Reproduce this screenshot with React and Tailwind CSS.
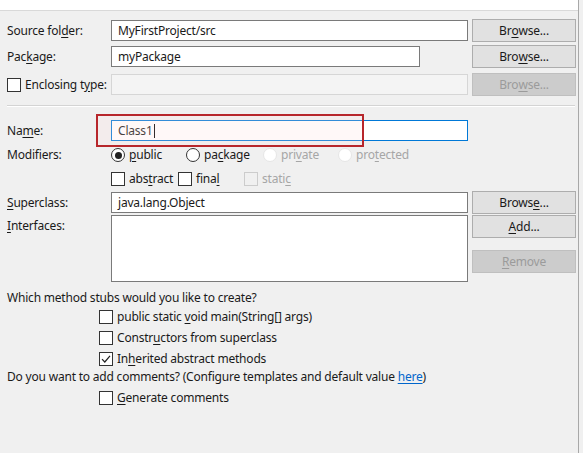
const U = ({ children }) => <span className="underline underline-offset-2">{children}</span>;

function Field({ w = 'w-[357px]', value, disabled, focused }) {
  return (
    <div
      className={
        'h-[21px] flex items-center px-[6px] ' +
        w +
        ' ' +
        (disabled
          ? 'bg-[#f4f4f4] border border-[#d6d6d6]'
          : focused
          ? 'bg-white border border-[#0078d7]'
          : 'bg-white border border-[#7a7a7a]')
      }
    >
      {value}
    </div>
  );
}

function Btn({ children, disabled }) {
  return (
    <div
      className={
        'w-[104px] h-[23px] flex items-center justify-center border ' +
        (disabled ? 'bg-[#cccccc] border-[#bfbfbf] text-[#9b9b9b]' : 'bg-[#e1e1e1] border-[#adadad]')
      }
    >
      {children}
    </div>
  );
}

function Box({ checked, disabled }) {
  return (
    <div
      className={
        'w-[14px] h-[14px] border flex items-center justify-center shrink-0 ' +
        (disabled ? 'border-[#cccccc] bg-[#f0f0f0]' : 'border-[#333333] bg-white')
      }
    >
      {checked && (
        <svg width="10" height="10" viewBox="0 0 10 10">
          <path d="M1 5.2 L3.8 8 L9 1.8" fill="none" stroke="#222" strokeWidth="1.2" />
        </svg>
      )}
    </div>
  );
}

function Radio({ checked, disabled }) {
  return (
    <div
      className={
        'w-[14px] h-[14px] rounded-full border flex items-center justify-center shrink-0 ' +
        (disabled ? 'border-[#e6e6e6] bg-white' : 'border-[#333333] bg-white')
      }
    >
      {checked && <div className="w-[7px] h-[7px] rounded-full bg-[#222]" />}
    </div>
  );
}

export default function App() {
  return (
    <div
      className="w-[583px] h-[453px] bg-[#f0f0f0] text-[12px] tracking-[-0.2px] text-[#1a1a1a] overflow-hidden flex"
      style={{ fontFamily: '"Noto Sans", "Open Sans", sans-serif' }}
    >
      <div className="w-[579px] border-r border-[#a8a8a8] flex flex-col">
        <div className="h-[11px] bg-white border-b border-[#d9d9d9]" />

        <div className="pl-[7px] flex flex-col">
          <div className="mt-[8px] h-[23px] flex items-center">
            <div className="w-[104px]">Source fol<U>d</U>er:</div>
            <Field value="MyFirstProject/src" />
            <div className="ml-[4px]"><Btn>Br<U>o</U>wse...</Btn></div>
          </div>

          <div className="mt-[3px] h-[23px] flex items-center">
            <div className="w-[104px]">Pac<U>k</U>age:</div>
            <Field w="w-[309px]" value="myPackage" />
            <div className="ml-[52px]"><Btn>Bro<U>w</U>se...</Btn></div>
          </div>

          <div className="mt-[5px] h-[23px] flex items-center">
            <div className="w-[104px] flex items-center gap-[4px]">
              <Box />
              <span>Enclosing t<U>y</U>pe:</span>
            </div>
            <Field disabled />
            <div className="ml-[4px]"><Btn disabled>Bro<U>w</U>se...</Btn></div>
          </div>

          <div className="mt-[9px] w-[568px] border-t border-[#d4d4d4] border-b border-b-white" />

          <div className="mt-[12px] h-[23px] flex items-center">
            <div className="w-[104px]">Na<U>m</U>e:</div>
            <div className="relative">
              <Field focused value={<span>Class1<span className="inline-block w-px h-[14px] bg-black align-middle ml-px" /></span>} />
              <div className="absolute left-[-15px] top-[-6px] w-[268px] h-[33px] border-2 border-[#b7262b] bg-[#ffdada]/20 pointer-events-none" />
            </div>
          </div>

          <div className="mt-[2px] h-[22px] flex items-center">
            <div className="w-[104px]">Modifiers:</div>
            <div className="flex items-center">
              <Radio checked />
              <span className="ml-[4px] w-[57px]"><U>p</U>ublic</span>
              <Radio />
              <span className="ml-[4px] w-[59px]">pa<U>c</U>kage</span>
              <Radio disabled />
              <span className="ml-[4px] w-[57px] text-[#a6a6a6]">pri<U>v</U>ate</span>
              <Radio disabled />
              <span className="ml-[4px] text-[#a6a6a6]">pro<U>t</U>ected</span>
            </div>
          </div>

          <div className="mt-[2px] h-[22px] flex items-center">
            <div className="w-[104px]" />
            <Box />
            <span className="ml-[4px] w-[49px]">abs<U>t</U>ract</span>
            <Box />
            <span className="ml-[4px] w-[48px]">fina<U>l</U></span>
            <Box disabled />
            <span className="ml-[4px] text-[#a6a6a6]">stati<U>c</U></span>
          </div>

          <div className="mt-[1px] h-[23px] flex items-center">
            <div className="w-[104px]"><U>S</U>uperclass:</div>
            <Field value="java.lang.Object" />
            <div className="ml-[4px]"><Btn>Brows<U>e</U>...</Btn></div>
          </div>

          <div className="mt-[1px] flex items-start">
            <div className="w-[104px] pt-[2px]"><U>I</U>nterfaces:</div>
            <div className="w-[357px] h-[67px] bg-white border border-[#7a7a7a]" />
            <div className="ml-[4px] flex flex-col gap-[12px]">
              <Btn><U>A</U>dd...</Btn>
              <Btn disabled><U>R</U>emove</Btn>
            </div>
          </div>

          <div className="mt-[8px] h-[16px] flex items-center">Which method stubs would you like to create?</div>

          <div className="pl-[92px] flex flex-col">
            <div className="h-[21px] flex items-center">
              <Box />
              <span className="ml-[4px]">public static <U>v</U>oid main(String[] args)</span>
            </div>
            <div className="h-[21px] flex items-center">
              <Box />
              <span className="ml-[4px]">Constr<U>u</U>ctors from superclass</span>
            </div>
            <div className="h-[21px] flex items-center">
              <Box checked />
              <span className="ml-[4px]">In<U>h</U>erited abstract methods</span>
            </div>
          </div>

          <div className="h-[16px] flex items-center">
            Do you want to add comments? (Configure templates and default value&nbsp;
            <span className="text-[#0066cc] underline underline-offset-2">here</span>)
          </div>

          <div className="pl-[92px] h-[26px] flex items-center">
            <Box />
            <span className="ml-[4px]"><U>G</U>enerate comments</span>
          </div>
        </div>
      </div>
    </div>
  );
}
